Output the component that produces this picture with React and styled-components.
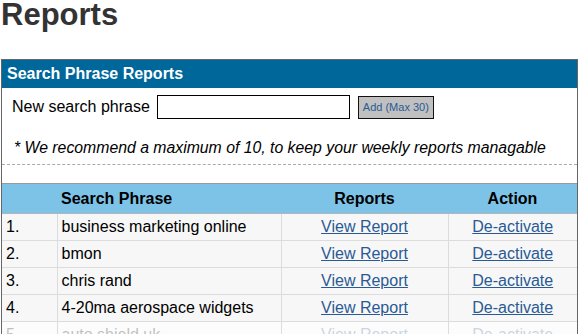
import React from 'react';
import styled, { createGlobalStyle } from 'styled-components';

const GlobalStyle = createGlobalStyle`
    body {
        margin: 0;
        background: #fff;
        font-family: "Liberation Sans", Arial, sans-serif;
        color: #000;
    }
`;

const rows = [
    { n: 1, phrase: 'business marketing online' },
    { n: 2, phrase: 'bmon' },
    { n: 3, phrase: 'chris rand' },
    { n: 4, phrase: '4-20ma aerospace widgets' },
    { n: 5, phrase: 'auto shield uk', faded: true },
];

export default function App() {
    return (
        <Page>
            <GlobalStyle />
            <Heading>Reports</Heading>

            <Panel>
                <PanelTitle>Search Phrase Reports</PanelTitle>

                <FormRow>
                    <Label>New search phrase</Label>
                    <Input type="text" />
                    <AddButton>Add (Max 30)</AddButton>
                </FormRow>

                <Note>* We recommend a maximum of 10, to keep your weekly reports managable</Note>

                <Table>
                    <colgroup>
                        <col style={{ width: 55 }} />
                        <col style={{ width: 224 }} />
                        <col style={{ width: 167 }} />
                        <col />
                    </colgroup>
                    <thead>
                        <tr>
                            <Th></Th>
                            <Th align="left">Search Phrase</Th>
                            <Th>Reports</Th>
                            <Th>Action</Th>
                        </tr>
                    </thead>
                    <tbody>
                        {rows.map(r => (
                            <Row key={r.n} faded={r.faded ? 1 : 0}>
                                <Td>{r.n}.</Td>
                                <Td>{r.phrase}</Td>
                                <Td align="center"><Link href="#">View Report</Link></Td>
                                <Td align="center"><Link href="#">De-activate</Link></Td>
                            </Row>
                        ))}
                    </tbody>
                </Table>
            </Panel>
        </Page>
    )
};

const Page = styled.div`
    width: 581px;
    height: 334px;
    overflow: hidden;
`;

const Heading = styled.h1`
    margin: 0;
    padding: 0 0 0 1px;
    height: 59px;
    font-size: 31px;
    line-height: 30px;
    font-weight: bold;
    color: #333;
`;

const Panel = styled.div`
    margin-left: 1px;
    width: 577px;
    box-sizing: border-box;
    border: 1px solid #666;
    border-bottom: none;
    height: 275px;
`;

const PanelTitle = styled.div`
    height: 28px;
    background: #00679a;
    color: #fff;
    font-size: 16px;
    font-weight: bold;
    line-height: 28px;
    padding-left: 5px;
`;

const FormRow = styled.div`
    display: flex;
    align-items: center;
    padding: 7px 0 0 10px;
    height: 24px;
`;

const Label = styled.span`
    font-size: 16px;
    margin-right: 7px;
`;

const Input = styled.input`
    width: 193px;
    height: 24px;
    box-sizing: border-box;
    border: 1px solid #000;
    margin: 0;
    padding: 0 4px;
    background: #fff;
`;

const AddButton = styled.button`
    margin-left: 8px;
    width: 76px;
    height: 23px;
    box-sizing: border-box;
    border: 1px solid #111;
    background: #c0c0c0;
    color: #2a5a95;
    font-family: "Liberation Sans", Arial, sans-serif;
    font-size: 11px;
    padding: 0;
`;

const Note = styled.p`
    margin: 0;
    padding: 20px 0 0 12px;
    height: 25px;
    box-sizing: content-box;
    font-size: 15.8px;
    font-style: italic;
    line-height: 18px;
    border-bottom: 1px dashed #aaa;
`;

const Table = styled.table`
    margin-top: 18px;
    width: 100%;
    border-collapse: collapse;
    table-layout: fixed;
    font-size: 16px;
`;

const Th = styled.th`
    background: #7dc3e8;
    height: 29px;
    padding: 0 4px;
    font-size: 16px;
    font-weight: bold;
    text-align: ${props => props.align || 'center'};
    border-top: 1px solid #9a9a9a;
    border-bottom: 1px solid #b5b5b5;
`;

const Row = styled.tr`
    background: #f7f7f7;
    opacity: ${props => props.faded ? 0.25 : 1};
`;

const Td = styled.td`
    height: 26px;
    padding: 0 4px;
    text-align: ${props => props.align || 'left'};
    border: 1px solid #dcdcdc;
    border-top: none;
    white-space: nowrap;
    &:first-child { border-left: none; }
    &:last-child { border-right: none; }
`;

const Link = styled.a`
    color: #2a5a95;
    text-decoration: underline;
    font-size: 16px;
`;
